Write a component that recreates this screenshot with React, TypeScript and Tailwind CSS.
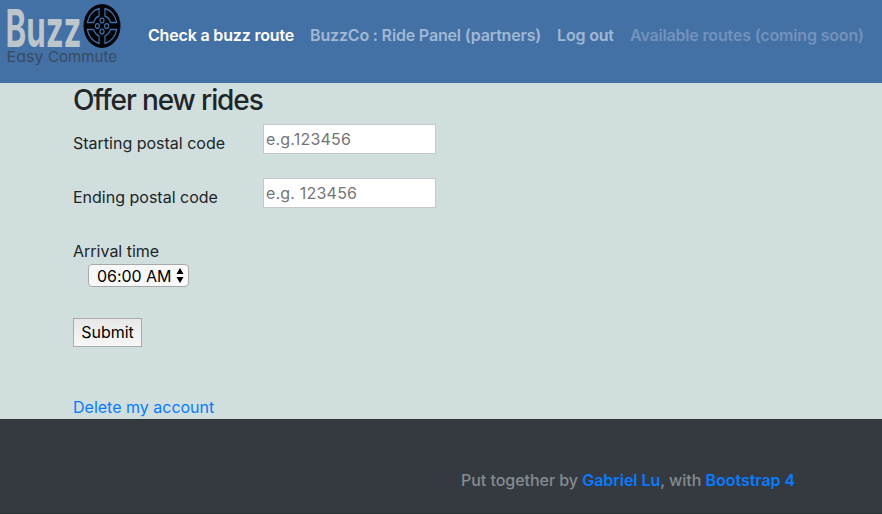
function Logo() {
  return (
    <svg className="block h-[70px] w-[124px] overflow-visible font-['Inter','Liberation_Sans',sans-serif] tracking-normal" viewBox="0 0 124 70" role="img" aria-label="Buzz Easy Commute">
      <text x="5.5" y="46.5" fontSize="52" fontWeight="700" fill="#bdc6ca" textLength="76" lengthAdjust="spacingAndGlyphs">Buzz</text>
      <g className="[font-feature-settings:'cv11']" fontSize="15" fontWeight="400" fill="#3a4a5e">
        <text x="6.5" y="62" textLength="37" lengthAdjust="spacingAndGlyphs">Easy</text>
        <text x="48" y="62" textLength="69" lengthAdjust="spacingAndGlyphs">Commute</text>
      </g>
      <g transform="translate(102 26) scale(.84 1)">
        <circle r="22" fill="#020408" />
        <g fill="none" stroke="#4170a6" strokeWidth="1.4" strokeLinejoin="round">
          {[0, 90, 180, 270].map((angle) => (
            <g key={angle} transform={`rotate(${angle})`}>
              <path d="M3.5-17.5A18 18 0 0 1 17.5-3.5L10-3.5A10.5 10.5 0 0 0 3.5-10Z" />
              <circle cy="-5.5" r="2.4" />
            </g>
          ))}
        </g>
      </g>
    </svg>
  );
}

function PostalField({ label, placeholder }: { label: string; placeholder: string }) {
  return (
    <div className="flex h-[54px] items-start">
      <label className="w-[190px] pt-[7px] leading-6">{label}</label>
      <input
        className="h-[30px] w-[173px] border border-[#c4c8c8] bg-white px-[2px] text-base tracking-[0.2px] placeholder:text-[#757575]"
        placeholder={placeholder}
      />
    </div>
  );
}

export default function App() {
  return (
    <div className="flex h-[514px] w-[882px] flex-col overflow-hidden bg-[#d0dfde] font-['Inter','Liberation_Sans',sans-serif] text-base tracking-[0px] text-[#212529]">
      <header className="flex h-[83px] shrink-0 items-start bg-[#4371a6]">
        <Logo />
        <nav className="flex pt-[23px] pl-6 leading-6 font-semibold tracking-[-0.17px] whitespace-nowrap text-[#a1b8d3]">
          <a className="w-[162px] text-white">Check a buzz route</a>
          <a className="w-[247px]">BuzzCo : Ride Panel (partners)</a>
          <a className="w-[73px]">Log out</a>
          <a className="text-[#7293bc]">Available routes (coming soon)</a>
        </nav>
      </header>
      <main className="flex h-[336px] shrink-0 flex-col items-start pl-[73px]">
        <h3 className="h-[41px] text-[28px] leading-[35px] font-medium tracking-[-1.1px]">Offer new rides</h3>
        <PostalField label="Starting postal code" placeholder="e.g.123456" />
        <PostalField label="Ending postal code" placeholder="e.g. 123456" />
        <label className="pt-[7px] leading-6">Arrival time</label>
        <button className="mt-px ml-[15px] flex h-[23px] w-[101px] items-center justify-between rounded-[4px] border border-[#a5a9a9] bg-[#f8f8f8] pr-[4px] pl-[8px] leading-5 tracking-[-0.05px] whitespace-nowrap text-black">
          <span>06:00 AM</span>
          <svg className="h-[15px] w-[8px]" viewBox="0 0 8 15" fill="currentColor"><path d="M4 0 7.5 6H.5ZM.5 9h7L4 15Z" /></svg>
        </button>
        <button className="mt-[31px] h-[29px] w-[69px] border border-[#a9abab] bg-linear-to-b from-[#e8e8e8] to-[#f7f7f7] pb-[2px] leading-6 text-black">Submit</button>
        <a className="mt-[48px] leading-6 text-[#087bff]">Delete my account</a>
      </main>
      <footer className="flex-1 border-y border-y-[#2b3538] bg-[#343a40] pt-[48px] pl-[461px] leading-6 font-medium tracking-[-0.04px] whitespace-nowrap text-[#868b90]">
        Put together by <a className="font-semibold text-[#087bff]">Gabriel Lu</a>, with <a className="font-semibold text-[#087bff]">Bootstrap 4</a>
      </footer>
    </div>
  );
}
